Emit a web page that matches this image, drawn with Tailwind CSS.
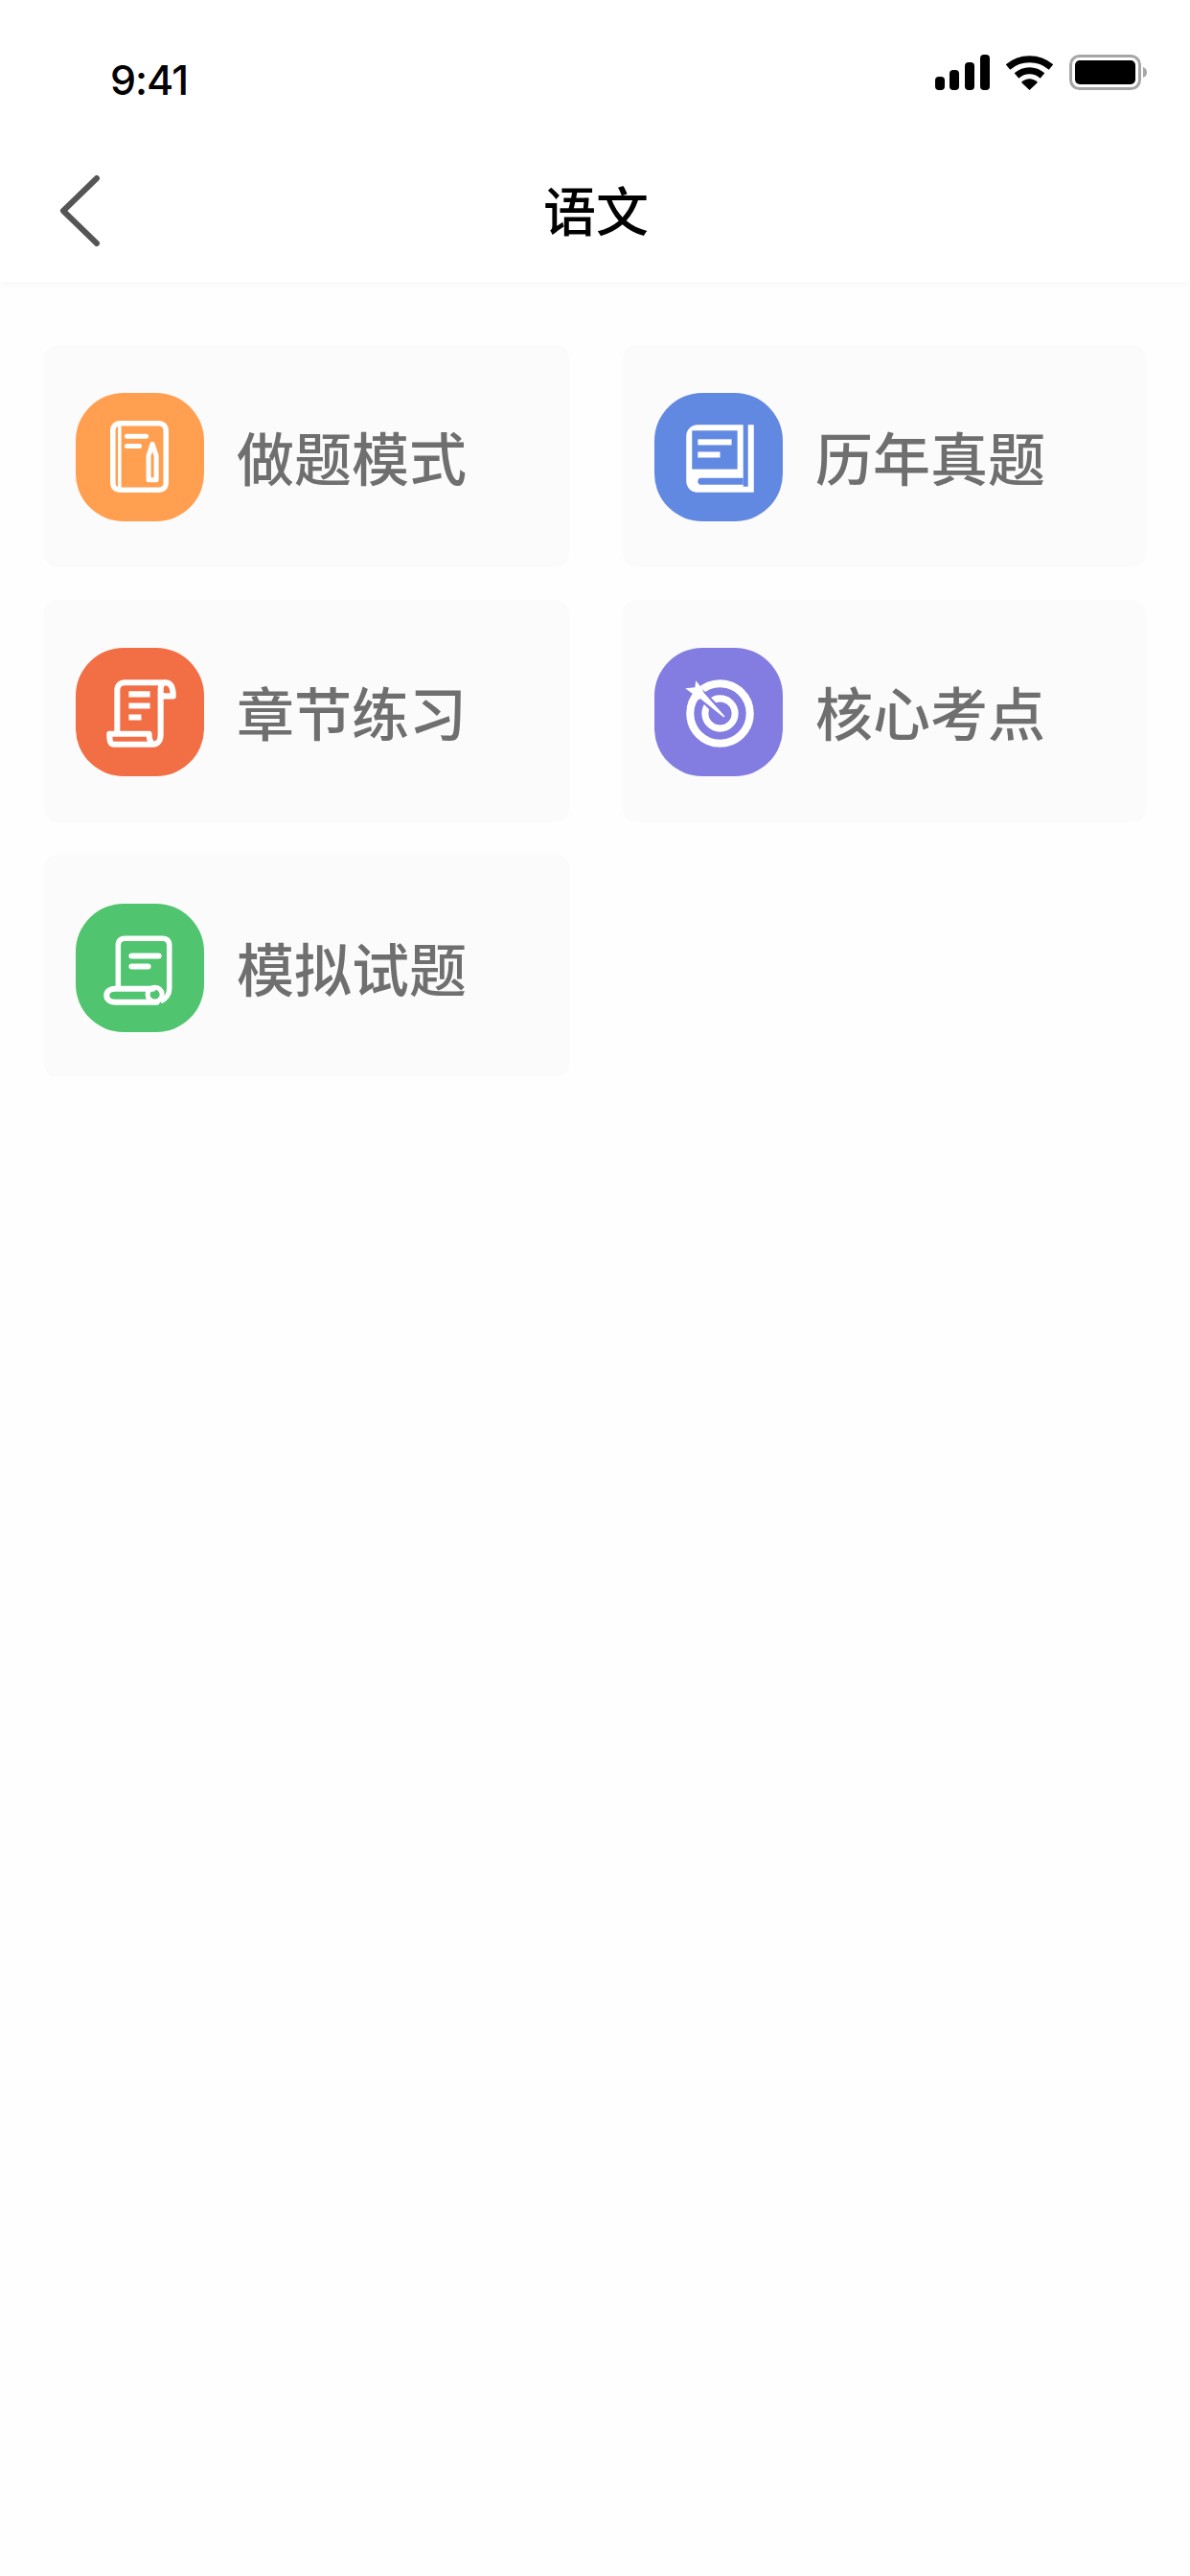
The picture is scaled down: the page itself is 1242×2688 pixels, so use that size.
<!DOCTYPE html>
<html lang="zh-CN">
<head>
    <meta charset="utf-8">
    <title>语文</title>
    <script src="https://cdn.jsdelivr.net/npm/@tailwindcss/browser@4"></script>
</head>
<body class="bg-[#fefefe] w-[1242px] h-[2688px] overflow-hidden font-['Noto_Sans_CJK_SC','Noto_Sans',sans-serif]">
<header class="bg-white shadow-[0_3px_8px_rgba(0,0,0,0.03)] h-[294px]">
    <!-- status bar -->
    <div class="h-[146px] flex justify-between items-start pl-[115px] pr-[45px] pt-[57px]">
        <span class="font-['Inter',sans-serif] font-medium text-[43px] leading-[52px] tracking-[-1px] text-black">9:41</span>
        <div class="flex items-start gap-[16px]">
            <svg class="w-[57px] h-[38px]" viewBox="0 0 57 38" fill="#000">
                <rect x="0" y="23" width="10" height="14" rx="4"/>
                <rect x="15" y="16" width="10" height="21" rx="4"/>
                <rect x="31" y="8" width="10" height="29" rx="4"/>
                <rect x="47" y="0" width="10" height="37" rx="4"/>
            </svg>
            <svg class="w-[51px] h-[38px]" viewBox="0 0 51 38" fill="none">
                <path d="M3 13 C16 2 35 2 48 13" stroke="#000" stroke-width="7"/>
                <path d="M12 22 C20 15 31 15 39 22" stroke="#000" stroke-width="7"/>
                <path d="M17 29 C22 24 29 24 34 29 L25.5 37 Z" fill="#000"/>
            </svg>
            <svg class="w-[81px] h-[38px]" viewBox="0 0 81 38" fill="none">
                <rect x="1.5" y="1.5" width="72" height="34" rx="9" stroke="#a6a6a6" stroke-width="3"/>
                <rect x="6" y="6" width="63" height="25" rx="5" fill="#000"/>
                <path d="M77 13 C80 14 81 16 81 18.500 C81 21 80 23 77 24 Z" fill="#a6a6a6"/>
            </svg>
        </div>
    </div>
    <!-- nav -->
    <nav class="h-[148px] grid grid-cols-[1fr_auto_1fr] items-center pb-[2px]">
        <svg class="w-[48px] h-[80px] ml-[60px]" viewBox="0 0 48 80" fill="none">
            <path d="M41 7 L6 41 L41 75" stroke="#555" stroke-width="6" stroke-linecap="round" stroke-linejoin="round"/>
        </svg>
        <h1 class="text-[55px] leading-[64px] font-medium text-black pb-[5px] pl-[2px]">语文</h1>
        <div></div>
    </nav>
</header>

<main class="grid grid-cols-[548px_546px] gap-x-[56px] gap-y-[34px] px-[46px] pt-[66px]">
    <a class="h-[232px] rounded-[14px] bg-[#fbfbfb] flex items-center pl-[33px] gap-[34px] pt-[2px]">
        <span class="w-[134px] h-[134px] rounded-[50px] bg-[#ff9f4f] shrink-0">
            <svg class="w-full h-full" viewBox="0 0 133 133" fill="none" stroke="#fff">
                <rect x="38.500" y="31.500" width="55" height="69" rx="7" stroke-width="5.500"/>
                <path d="M45.500 31 V101" stroke-width="3.500"/>
                <path d="M53 45 H73 M53 55 H66" stroke-width="5" stroke-linecap="round"/>
                <path d="M75.500 65 L79.500 53 L83.500 65 V90 H75.500 Z" stroke-width="5" stroke-linejoin="round"/>
            </svg>
        </span>
        <span class="text-[60px] leading-[70px] font-medium text-[#6f6f6f] pb-[3px]">做题模式</span>
    </a>
    <a class="h-[232px] rounded-[14px] bg-[#fbfbfb] flex items-center pl-[33px] gap-[34px] pt-[2px]">
        <span class="w-[134px] h-[134px] rounded-[50px] bg-[#6289e2] shrink-0">
            <svg class="w-full h-full" viewBox="0 0 133 133">
                <path d="M45 33 H92 V97 H97 V33 H103 V103 H45 C38 103 33 98 33 91 V45 C33 38 38 33 45 33 Z" fill="#fff"/>
                <rect x="39" y="39" width="47" height="40" fill="#6289e2"/>
                <path d="M48 88 H92 V95 H48 C44 95 44 88 48 88 Z" fill="#6289e2"/>
                <rect x="45" y="48" width="35" height="6" fill="#fff"/>
                <rect x="45" y="61" width="23" height="6" fill="#fff"/>
            </svg>
        </span>
        <span class="text-[60px] leading-[70px] font-medium text-[#6f6f6f] pb-[3px]">历年真题</span>
    </a>
    <a class="h-[232px] rounded-[14px] bg-[#fbfbfb] flex items-center pl-[33px] gap-[34px] pt-[2px]">
        <span class="w-[134px] h-[134px] rounded-[50px] bg-[#f26e45] shrink-0">
            <svg class="w-full h-full" viewBox="0 0 133 133" fill="none">
                <path d="M43 87 V44 C43 39 46 36 51 36 H93 C98 36 101 40 101 50 H88 V90 C88 96 85 100 80 100 H40 C36 100 35 97 35 89 H76 C76 95 78 99 81 100" stroke="#fff" stroke-width="6" stroke-linejoin="round"/>
                <path d="M88 50 V42 C88 38 91 36 93 36" stroke="#fff" stroke-width="6"/>
                <circle cx="94" cy="43" r="2.500" fill="#f26e45"/>
                <path d="M55 48 H77 M55 60 H77 M55 72 H68" stroke="#fff" stroke-width="6"/>
            </svg>
        </span>
        <span class="text-[60px] leading-[70px] font-medium text-[#6f6f6f] pb-[3px]">章节练习</span>
    </a>
    <a class="h-[232px] rounded-[14px] bg-[#fbfbfb] flex items-center pl-[33px] gap-[34px] pt-[2px]">
        <span class="w-[134px] h-[134px] rounded-[50px] bg-[#837de2] shrink-0">
            <svg class="w-full h-full" viewBox="0 0 133 133" fill="none">
                <circle cx="68" cy="68" r="31" stroke="#fff" stroke-width="8"/>
                <circle cx="68" cy="68" r="15.500" stroke="#fff" stroke-width="7"/>
                <path d="M30 30 L66 66" stroke="#837de2" stroke-width="10"/>
                <path d="M47 43 L72 71 L43 48 Z" fill="#fff" stroke="#fff" stroke-width="1.500" stroke-linejoin="round"/>
                <path d="M32 42 L42 41 L43 34 L50 43 L52 50 L45 54 L40 48 Z" fill="#fff"/>
            </svg>
        </span>
        <span class="text-[60px] leading-[70px] font-medium text-[#6f6f6f] pb-[3px]">核心考点</span>
    </a>
    <a class="h-[232px] rounded-[14px] bg-[#fbfbfb] flex items-center pl-[33px] gap-[34px] pt-[4px]">
        <span class="w-[134px] h-[134px] rounded-[50px] bg-[#50c46f] shrink-0">
            <svg class="w-full h-full" viewBox="0 0 133 133" fill="none" stroke="#fff">
                <path d="M44 86 V43 C44 38 47 36 51 36 H90 C94 36 97 38 97 43 V88 C97 94 93 99 88 101" stroke-width="5.500"/>
                <path d="M80 88 H41 C29 88 29 102 41 102 H84" stroke-width="6" stroke-linecap="round"/>
                <circle cx="82" cy="94" r="7.500" stroke-width="5"/>
                <path d="M58 54 H86 M58 65 H75" stroke-width="6" stroke-linecap="round"/>
            </svg>
        </span>
        <span class="text-[60px] leading-[70px] font-medium text-[#6f6f6f] pb-[3px]">模拟试题</span>
    </a>
</main>
</body>
</html>
